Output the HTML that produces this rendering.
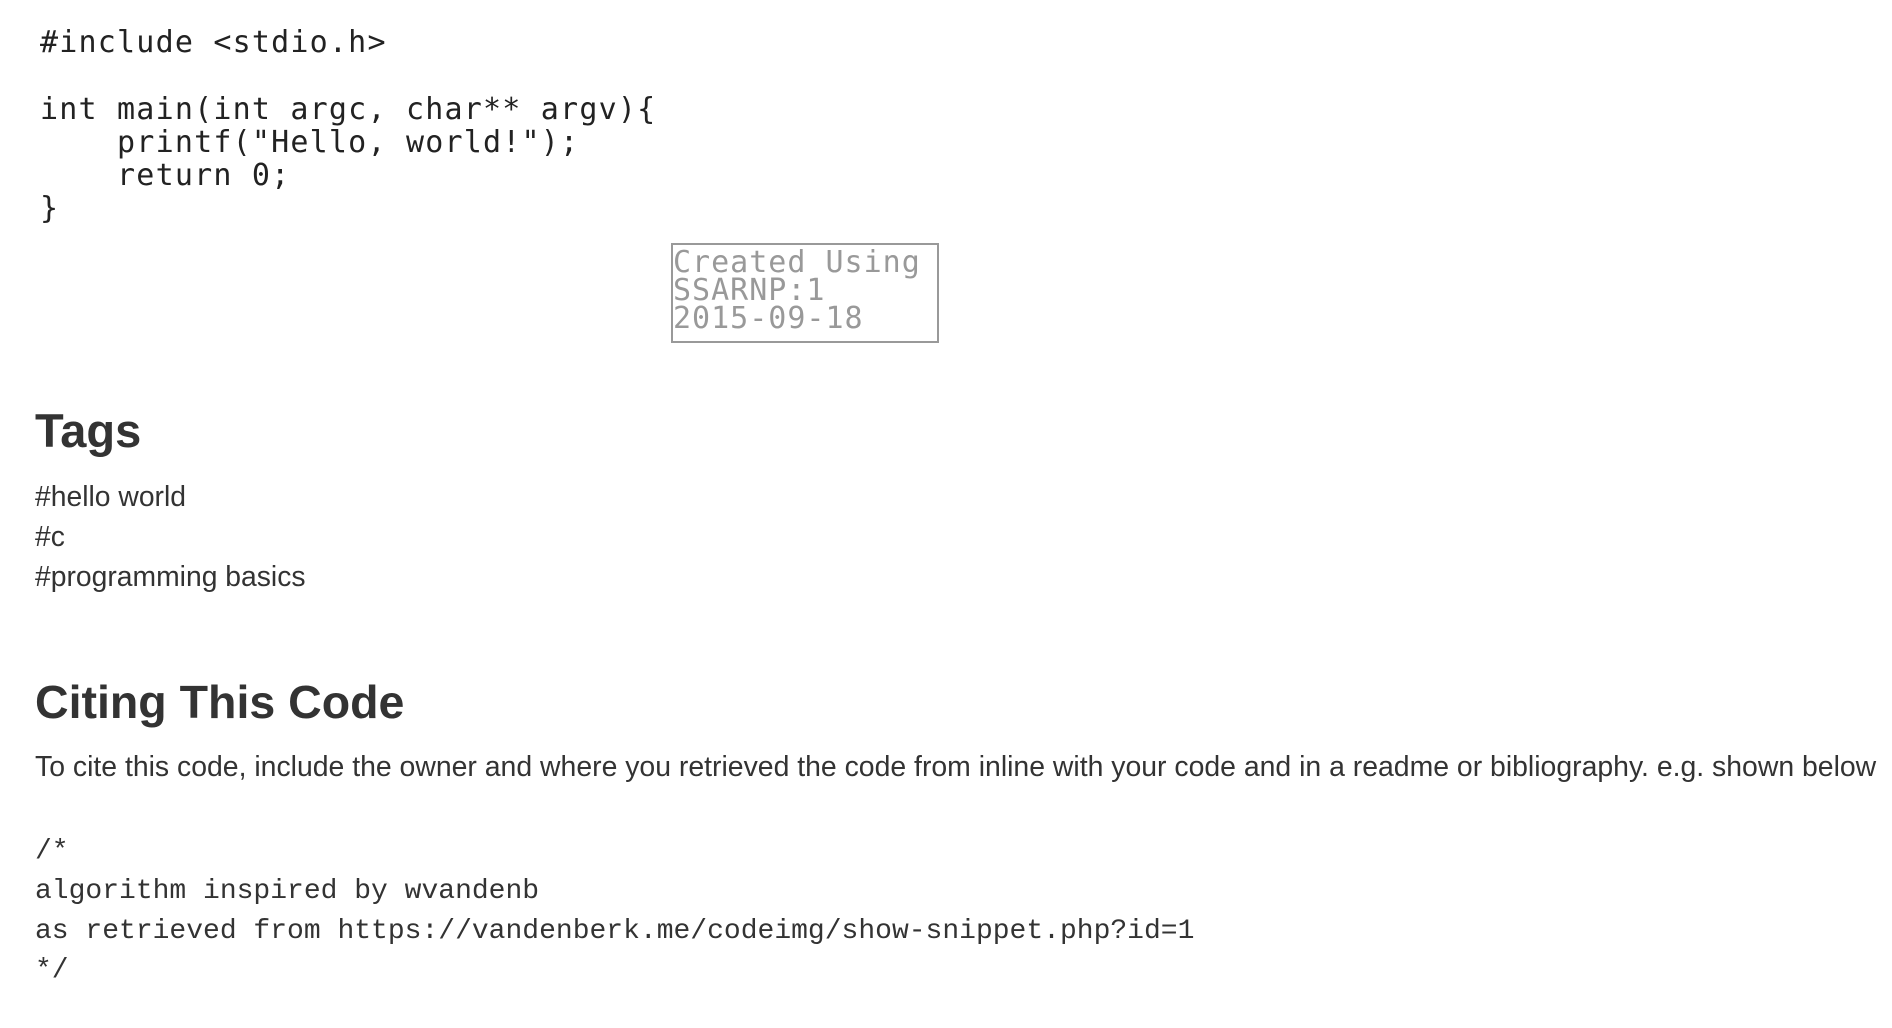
<!DOCTYPE html>
<html><head><meta charset="utf-8"><style>
body{margin:0;width:1892px;height:1028px;background:#fff;position:relative;overflow:hidden;font-family:"Liberation Sans",Arial,sans-serif;color:#333}
.a{position:absolute;white-space:pre;margin:0}
.code{font-family:"DejaVu Sans Mono",monospace;font-size:30px;letter-spacing:1.2px;color:#222;line-height:33px}
.box{position:absolute;left:671px;top:243px;width:268px;height:100px;border:2px solid #999;box-sizing:border-box}
.boxt{font-family:"DejaVu Sans Mono",monospace;font-size:30px;line-height:28px;color:#999;letter-spacing:1px}
h{font-weight:bold;font-size:47px;color:#333}
.t{font-size:28.3px;color:#333}
.m{font-family:"Liberation Mono",monospace;font-size:28px;color:#333}
</style></head><body>
<div class="a code" style="left:40px;top:26px">#include &lt;stdio.h&gt;</div>
<div class="a code" style="left:40px;top:93px">int main(int argc, char** argv){
    printf("Hello, world!");
    return 0;
}</div>
<div class="box"></div>
<div class="a boxt" style="left:673px;top:249px">Created Using
SSARNP:1
2015-09-18</div>
<div class="a" style="left:35px;top:403px"><h>Tags</h></div>
<div class="a t" style="left:35px;top:480px">#hello world</div>
<div class="a t" style="left:35px;top:520px">#c</div>
<div class="a t" style="left:35px;top:560px">#programming basics</div>
<div class="a" style="left:35px;top:675px"><h style="font-size:46.5px">Citing This Code</h></div>
<div class="a t" style="left:35px;top:751px;font-size:28.4px">To cite this code, include the owner and where you retrieved the code from inline with your code and in a readme or bibliography. e.g. shown below</div>
<div class="a m" style="left:35px;top:836px">/*</div>
<div class="a m" style="left:35px;top:876px">algorithm inspired by wvandenb</div>
<div class="a m" style="left:35px;top:916px">as retrieved from https://vandenberk.me/codeimg/show-snippet.php?id=1</div>
<div class="a m" style="left:35px;top:955px">*/</div>
</body></html>
